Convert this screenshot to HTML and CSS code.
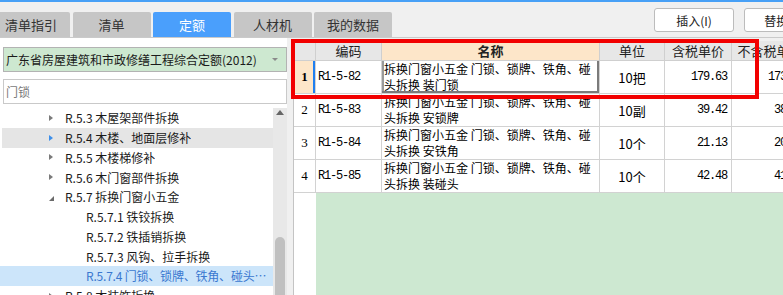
FILE: index.html
```html
<!DOCTYPE html>
<html lang="zh-CN">
<head>
    <meta charset="UTF-8">
    <title>定额</title>
    <link rel="stylesheet" href="styles.css">
</head>
<body>
    <div class="topbar">
        <div class="tabs">
            <div class="tab">清单指引</div>
            <div class="tab">清单</div>
            <div class="tab active">定额</div>
            <div class="tab">人材机</div>
            <div class="tab">我的数据</div>
        </div>
        <div class="actions">
            <button class="btn">插入(I)</button>
            <button class="btn">替换(R)</button>
        </div>
    </div>

    <div class="main">
        <div class="side">
            <div class="select">广东省房屋建筑和市政修缮工程综合定额(2012)<span class="caret"></span></div>
            <div class="search">门锁</div>
            <div class="tree-wrap">
                <ul class="tree">
                    <li class="node l2"><span class="arrow"></span><span class="label">R.5.3 木屋架部件拆换</span></li>
                    <li class="node l2 hover"><span class="arrow"></span><span class="label">R.5.4 木楼、地面层修补</span></li>
                    <li class="node l2"><span class="arrow"></span><span class="label">R.5.5 木楼梯修补</span></li>
                    <li class="node l2"><span class="arrow"></span><span class="label">R.5.6 木门窗部件拆换</span></li>
                    <li class="node l2"><span class="arrow open"></span><span class="label">R.5.7 拆换门窗小五金</span></li>
                    <li class="node l3"><span class="label">R.5.7.1 铁铰拆换</span></li>
                    <li class="node l3"><span class="label">R.5.7.2 铁插销拆换</span></li>
                    <li class="node l3"><span class="label">R.5.7.3 风钩、拉手拆换</span></li>
                    <li class="node l3 selected"><span class="label">R.5.7.4 门锁、锁牌、铁角、碰头拆换</span></li>
                    <li class="node l2"><span class="arrow"></span><span class="label">R.5.8 木装饰拆换</span></li>
                </ul>
                <div class="scrollbar">
                    <span class="up"></span>
                    <span class="thumb"></span>
                </div>
            </div>
        </div>

        <div class="panel">
            <div class="sheet">
                <div class="row head">
                    <div class="cell"></div>
                    <div class="cell">编码</div>
                    <div class="cell current-col">名称</div>
                    <div class="cell">单位</div>
                    <div class="cell">含税单价</div>
                    <div class="cell">不含税单价</div>
                </div>
                <div class="row">
                    <div class="cell no active-no">1</div>
                    <div class="cell code">R1-5-82</div>
                    <div class="cell name focus">拆换门窗小五金 门锁、锁牌、铁角、碰头拆换 装门锁</div>
                    <div class="cell unit">10把</div>
                    <div class="cell num">179.63</div>
                    <div class="cell num">173.65</div>
                </div>
                <div class="row">
                    <div class="cell no">2</div>
                    <div class="cell code">R1-5-83</div>
                    <div class="cell name">拆换门窗小五金 门锁、锁牌、铁角、碰头拆换 安锁牌</div>
                    <div class="cell unit">10副</div>
                    <div class="cell num">39.42</div>
                    <div class="cell num">38.11</div>
                </div>
                <div class="row">
                    <div class="cell no">3</div>
                    <div class="cell code">R1-5-84</div>
                    <div class="cell name">拆换门窗小五金 门锁、锁牌、铁角、碰头拆换 安铁角</div>
                    <div class="cell unit">10个</div>
                    <div class="cell num">21.13</div>
                    <div class="cell num">20.42</div>
                </div>
                <div class="row">
                    <div class="cell no">4</div>
                    <div class="cell code">R1-5-85</div>
                    <div class="cell name">拆换门窗小五金 门锁、锁牌、铁角、碰头拆换 装碰头</div>
                    <div class="cell unit">10个</div>
                    <div class="cell num">42.48</div>
                    <div class="cell num">41.07</div>
                </div>
                <div class="filler">
                    <div class="filler-no"></div>
                    <div class="filler-green"></div>
                </div>
            </div>
        </div>
    </div>

    <div class="mark"></div>
</body>
</html>
```

FILE: styles.css
```css
* {
    box-sizing: border-box;
}
html, body {
    margin: 0;
    width: 783px;
    height: 295px;
    overflow: hidden;
}
body {
    position: relative;
    background-color: #f0f0f0;
    font-family: "Noto Sans CJK SC", "Noto Sans", sans-serif;
    font-size: 12px;
    color: #1a1a1a;
}

/* top bar */
.topbar {
    display: flex;
    height: 38px;
    border-top: 2px solid #47a0f6;
    border-bottom: 1px solid #cacaca;
}
.tabs {
    display: flex;
    align-items: flex-end;
    gap: 2.5px;
    margin-left: -8px;
    flex-shrink: 0;
}
.tab {
    width: 78px;
    height: 25px;
    line-height: 25px;
    text-align: center;
    font-size: 13px;
    color: #333;
    background-color: #c6c6c6;
    border-radius: 2px 2px 0 0;
}
.tab.active {
    background-color: #4a9ffc;
    color: #fff;
}
.actions {
    display: flex;
    gap: 10px;
    margin-left: 262px;
    padding-top: 6px;
    flex-shrink: 0;
}
.btn {
    width: 80px;
    height: 24px;
    padding: 0;
    background-color: #fff;
    border: 1px solid #bcbcbc;
    border-radius: 3px;
    font-family: "Noto Sans CJK SC", "Noto Sans", sans-serif;
    font-size: 12px;
    color: #222;
}

/* layout */
.main {
    display: flex;
    height: 257px;
}
.side {
    width: 287px;
    flex-shrink: 0;
    background-color: #fff;
    padding-top: 9px;
    display: flex;
    flex-direction: column;
}
.select {
    position: relative;
    height: 25px;
    margin-left: 3px;
    padding-left: 2px;
    line-height: 23px;
    background-color: #cde8d0;
    border: 1px solid #b3b3b3;
    white-space: nowrap;
}
.caret {
    position: absolute;
    right: 8px;
    top: 10px;
    border-top: 3px solid #8a8a8a;
    border-left: 3px solid transparent;
    border-right: 3px solid transparent;
}
.search {
    height: 25px;
    margin: 7px 0 0 3px;
    padding-left: 2px;
    line-height: 23px;
    border: 1px solid #c9c9c9;
    color: #7a7a7a;
}

/* tree */
.tree-wrap {
    display: flex;
    flex: 1;
    margin-top: 4px;
    overflow: hidden;
}
.tree {
    list-style: none;
    margin: 0;
    padding: 0;
    width: 273px;
}
.node {
    display: flex;
    align-items: center;
    height: 19.75px;
    white-space: nowrap;
    color: #1a1a1a;
}
.node.l2 {
    padding-left: 49px;
}
.node.l3 {
    padding-left: 86px;
}
.arrow {
    width: 0;
    height: 0;
    margin-right: 12px;
    border-left: 4px solid #7a7a7a;
    border-top: 3.5px solid transparent;
    border-bottom: 3.5px solid transparent;
}
.arrow.open {
    border-left: 0;
    border-bottom: 0;
    border-right: 5px solid #6a6a6a;
    border-top: 5px solid transparent;
    margin-top: 4px;
    margin-right: 11px;
}
.label {
    overflow: hidden;
    text-overflow: ellipsis;
}
.node.hover {
    background-color: #e5e5e5;
    margin-left: 2px;
    padding-left: 47px;
}
.node.hover .arrow {
    border-left-color: #3d8fea;
}
.node.selected {
    background-color: #cce5fa;
    color: #3a78d0;
    letter-spacing: -0.2px;
}
.scrollbar {
    width: 14px;
    display: flex;
    flex-direction: column;
    align-items: center;
    background-color: #e8e8e8;
}
.up {
    margin-top: 2px;
    border-bottom: 5px solid #666;
    border-left: 4.5px solid transparent;
    border-right: 4.5px solid transparent;
}
.thumb {
    width: 10px;
    height: 58px;
    margin-top: auto;
    background-color: #c0c0c0;
    border-radius: 5px 5px 0 0;
}

/* grid */
.panel {
    flex: 1;
    margin-left: 6px;
    padding-top: 3px;
    display: flex;
    flex-direction: column;
    min-width: 0;
}
.sheet {
    flex: 1;
    display: flex;
    flex-direction: column;
    overflow: hidden;
    background-color: #fff;
    border-left: 1px solid #c4c4c4;
}
.row {
    display: grid;
    grid-template-columns: 22px 66px 218px 65px 67px 77px;
    width: 515px;
    height: 33px;
    flex-shrink: 0;
}
.cell {
    border-right: 1px solid #d2d2d2;
    border-bottom: 1px solid #d2d2d2;
    overflow: hidden;
    white-space: nowrap;
    display: flex;
    align-items: center;
    color: #000;
}
.head {
    height: 20px;
}
.head .cell {
    justify-content: center;
    background-color: #e7e7e7;
    border-color: #cfcfcf;
    font-size: 13px;
    color: #222;
}
.head .current-col {
    background-color: #fde6c9;
    font-weight: bold;
}
.no {
    justify-content: center;
    font-family: "Liberation Serif", serif;
    font-size: 13px;
}
.active-no {
    background-color: #fde6c9;
    font-weight: bold;
    box-shadow: inset -2px 0 0 #1f7ff0;
}
.code {
    padding-left: 2px;
    font-family: "Liberation Mono", monospace;
    font-size: 12px;
    letter-spacing: -1.2px;
}
.name {
    white-space: normal;
    padding: 0 2px;
    line-height: 16px;
    font-size: 12px;
}
.name.focus {
    box-shadow: inset -2px -2px 0 #7b7b7b, inset 2px 0 0 #9a9a9a;
}
.unit {
    justify-content: center;
    font-size: 13px;
}
.num {
    justify-content: flex-end;
    padding-right: 4px;
    font-family: "Liberation Mono", monospace;
    font-size: 12px;
    letter-spacing: -1.2px;
}
.filler {
    flex: 1;
    display: flex;
}
.filler-no {
    width: 22px;
    background-color: #fff;
}
.filler-green {
    flex: 1;
    background-color: #cde8d1;
}

/* annotation */
.mark {
    position: absolute;
    left: 291px;
    top: 39px;
    width: 468px;
    height: 60px;
    border: 4px solid #f20000;
}
```
